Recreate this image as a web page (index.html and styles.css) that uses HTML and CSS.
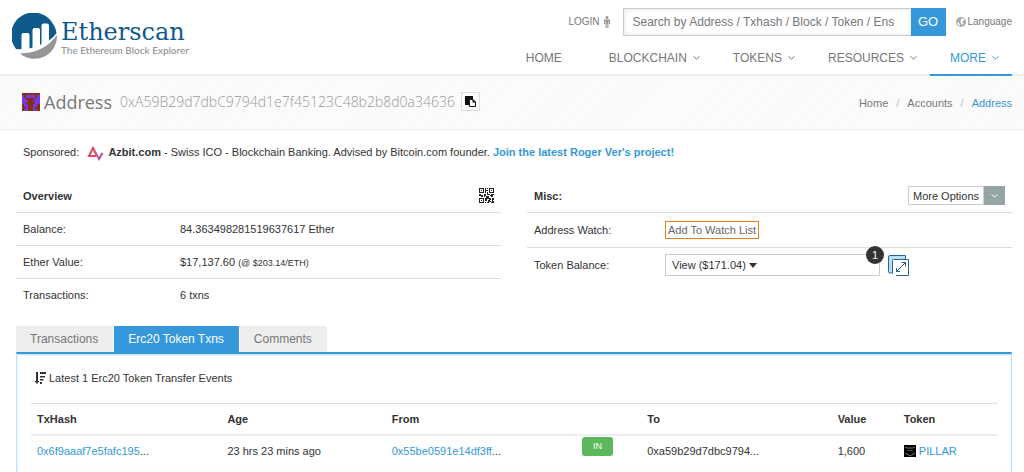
FILE: index.html
```html
<!DOCTYPE html>
<html lang="en">
<head>
  <meta charset="UTF-8" />
  <meta name="viewport" content="width=device-width, initial-scale=1.0"/>
  <title>Etherscan - Address</title>
  <link rel="stylesheet" href="styles.css">
</head>
<body>

<!-- Header -->
<header class="header">
  <a class="logo" href="#">
    <svg class="logo-mark" viewBox="0 0 46 48" aria-hidden="true">
      <path fill="#0e5a8a" d="M4 36A22.500 22.500 0 1 1 42 12.500Q44 16 44.500 20Q42 24 37 27.500V12.500Q37 10.500 35 10.500H31.500Q29.500 10.500 29.500 12.500V31L28 32V17Q28 15 26 15H22.500Q20.500 15 20.500 17V34.500L17.500 35.500V22Q17.500 20 15.500 20H11.500Q9.500 20 9.500 22V36Q7 36.500 4 36Z"/>
      <path fill="#959594" d="M8 40.500Q32 40 45 22A22.500 22.500 0 0 1 8 40.500Z"/>
    </svg>
    <span class="logo-text">
      <span class="logo-name">Etherscan</span>
      <span class="logo-tag">The Ethereum Block Explorer</span>
    </span>
  </a>

  <div class="header-right">
    <div class="topbar">
      <a class="login" href="#">LOGIN
        <svg class="icon-person" viewBox="0 0 8 12" aria-hidden="true"><circle cx="4" cy="1.500" r="1.500"/><path d="M1 3.500H7V8H6V5H5.500V12H4.300V8H3.700V12H2.500V5H2V8H1Z"/></svg>
      </a>
      <form class="search">
        <input type="text" aria-label="Search" placeholder="Search by Address / Txhash / Block / Token / Ens" />
        <button type="button">GO</button>
      </form>
      <a class="language" href="#">
        <svg class="icon-globe" viewBox="0 0 10 10" aria-hidden="true"><circle cx="5" cy="5" r="5" fill="#aaa"/><path fill="#fff" d="M6 1L8.500 2.500L7.500 4L6 4.500L7.500 6L6.500 8L5 6.500L4.500 4ZM1 5L3 6L4 8L3 9L1.500 7Z"/></svg>
        Language
      </a>
    </div>
    <nav class="nav">
      <a class="home" href="#">HOME</a>
      <a href="#">BLOCKCHAIN <svg class="caret" viewBox="0 0 7 4"><path d="M0.500 0.500L3.500 3L6.500 0.500"/></svg></a>
      <a href="#">TOKENS <svg class="caret" viewBox="0 0 7 4"><path d="M0.500 0.500L3.500 3L6.500 0.500"/></svg></a>
      <a href="#">RESOURCES <svg class="caret" viewBox="0 0 7 4"><path d="M0.500 0.500L3.500 3L6.500 0.500"/></svg></a>
      <a class="active" href="#">MORE <svg class="caret" viewBox="0 0 7 4"><path d="M0.500 0.500L3.500 3L6.500 0.500"/></svg></a>
    </nav>
  </div>
</header>

<!-- Address bar -->
<section class="breadcrumbs">
  <svg class="identicon" viewBox="0 0 8 8" shape-rendering="crispEdges" aria-hidden="true">
    <path fill="#7638ee" d="M0 0H8V8H0Z"/>
    <path fill="#84300f" d="M0 0H8V1H0ZM1 1H2V2H1ZM6 1H7V2H6ZM2 2H6V3H2ZM3 3H5V7H3ZM2 4H3V5H2ZM5 4H6V5H5ZM0 5H1V8H0ZM7 5H8V8H7ZM1 6H2V7H1ZM6 6H7V7H6ZM3 7H5V8H3Z"/>
  </svg>
  <h1>Address</h1>
  <span class="hash">0xA59B29d7dbC9794d1e7f45123C48b2b8d0a34636</span>
  <button class="copy" type="button" aria-label="Copy address">
    <svg viewBox="0 0 11 11"><path fill="#111" d="M0 0H8V3H4V9H0Z"/><path fill="#fff" stroke="#111" d="M4.500 3.500H8L10.500 6V10.500H4.500Z"/><path fill="#111" d="M7.500 3V6.500H11Z"/></svg>
  </button>
  <ol class="crumbs">
    <li><a href="#">Home</a></li>
    <li><a href="#">Accounts</a></li>
    <li><a class="current" href="#">Address</a></li>
  </ol>
</section>

<main class="container">
  <p class="sponsored">
    Sponsored:
    <svg class="azbit" viewBox="0 0 17 16" aria-hidden="true"><path fill="none" stroke="#dc4860" stroke-width="2" d="M9 11H2L6 3L9 9"/><path fill="none" stroke="#b0559b" stroke-width="2" d="M8 7L12 14L15.500 8"/></svg>
    <b>Azbit.com</b> - Swiss ICO - Blockchain Banking. Advised by Bitcoin.com founder.
    <a href="#"><b>Join the latest Roger Ver's project!</b></a>
  </p>

  <!-- Summary -->
  <div class="summary">
    <section>
      <div class="row head">
        <h2>Overview</h2>
        <svg class="qr" viewBox="0 0 15 15" shape-rendering="crispEdges" aria-hidden="true">
          <path fill="#222" fill-rule="evenodd" d="M0 0H5V5H0ZM1 1V4H4V1ZM10 0H15V5H10ZM11 1V4H14V1ZM0 10H5V15H0ZM1 11V14H4V11Z"/>
          <path fill="#222" d="M2 2H3V3H2ZM12 2H13V3H12ZM2 12H3V13H2ZM6 0H7V2H9V3H7V5H6ZM8 0H9V1H8ZM8 4H9V6H11V7H8ZM0 6H2V7H4V9H2V8H0ZM5 6H7V8H6V9H5ZM12 6H15V7H14V9H12V8H11V7H12ZM7 8H10V10H12V12H10V11H8V13H6V10H7ZM13 10H15V12H14V13H15V15H12V14H13ZM9 12H11V13H12V14H10V15H8V14H9ZM6 14H7V15H6Z"/>
        </svg>
      </div>
      <div class="row"><span class="label">Balance:</span><span>84.363498281519637617 Ether</span></div>
      <div class="row"><span class="label">Ether Value:</span><span>$17,137.60 <small>(@ $203.14/ETH)</small></span></div>
      <div class="row"><span class="label">Transactions:</span><span>6 txns</span></div>
    </section>

    <section class="misc">
      <div class="row head">
        <h2>Misc:</h2>
        <div class="options">
          <button type="button">More Options</button>
          <button class="toggle" type="button" aria-label="Show options"><svg class="caret" viewBox="0 0 7 4"><path d="M0.500 0.500L3.500 3L6.500 0.500"/></svg></button>
        </div>
      </div>
      <div class="row"><span class="label">Address Watch:</span><button class="watch" type="button">Add To Watch List</button></div>
      <div class="row">
        <span class="label">Token Balance:</span>
        <button class="balance" type="button">View ($171.04) <span class="triangle"></span><span class="badge">1</span></button>
        <a class="expand" href="#" aria-label="Expand token balance">
          <svg viewBox="0 0 21 21"><path fill="#b9def5" stroke="#28659b" d="M0.500 2Q0.500 0.500 2 0.500H17.500V4.500H5.500V18H2Q0.500 18 0.500 16.500Z"/><path fill="#fff" d="M5 4H21V21H5Z"/><path fill="none" stroke="#28659b" d="M4.500 18V5.500Q4.500 4.500 5.500 4.500H20.500V20.500H8"/><path fill="none" stroke="#1f5c96" d="M8.500 16.500L17 8M13.500 7.500H17.500V11.500M8.500 13V16.500H12"/></svg>
        </a>
      </div>
    </section>
  </div>

  <!-- Tabs -->
  <div class="tabs">
    <button type="button">Transactions</button>
    <button class="active" type="button">Erc20 Token Txns</button>
    <button type="button">Comments</button>
  </div>

  <section class="panel">
    <p class="latest">
      <svg class="icon-sort" viewBox="0 0 12 12" aria-hidden="true"><path fill="#333" d="M2 0H4V9H5.500L3 12L0.500 9H2ZM6 0H12V2H6ZM6 4H11V5.500H6ZM6 7H9.500V8.500H6ZM6 10H8V12H6Z"/></svg>
      Latest 1 Erc20 Token Transfer Events
    </p>
    <table>
      <colgroup>
        <col class="col-hash"><col class="col-age"><col class="col-hash"><col class="col-dir"><col class="col-hash"><col class="col-value"><col class="col-token">
      </colgroup>
      <thead>
        <tr><th>TxHash</th><th>Age</th><th>From</th><th></th><th>To</th><th>Value</th><th>Token</th></tr>
      </thead>
      <tbody>
        <tr>
          <td><a href="#">0x6f9aaaf7e5fafc195</a>...</td>
          <td>23 hrs 23 mins ago</td>
          <td><a href="#">0x55be0591e14df3ff</a>...</td>
          <td class="dir"><span class="in">IN</span></td>
          <td>0xa59b29d7dbc9794...</td>
          <td>1,600</td>
          <td class="token"><svg class="pillar" viewBox="0 0 12 12" aria-hidden="true"><path d="M0 0H12V12H0Z"/><path fill="none" stroke="#777" d="M1 2L3 3H9L11 2M1 8L6 11L11 8"/><path stroke="#444" d="M3 5.500H9"/></svg> <a href="#">PILLAR</a></td>
        </tr>
      </tbody>
    </table>
  </section>
</main>

</body>
</html>
```
FILE: styles.css
```css
* {
  box-sizing: border-box;
}

body {
  margin: 0;
  background: #fff;
  color: #333;
  font-family: "Liberation Sans", Arial, sans-serif;
  font-size: 11px;
  line-height: 16px;
}

a {
  color: #3498db;
  text-decoration: none;
}

button, input {
  font: inherit;
  color: inherit;
}

button {
  padding: 0;
  border: 0;
  background: none;
  cursor: pointer;
}

h1, h2, p, ol {
  margin: 0;
}

/* Header */
.header {
  display: flex;
  justify-content: space-between;
  padding: 0 12px;
  border-bottom: 2px solid #eee;
}

.logo {
  display: flex;
  align-items: center;
  gap: 3px;
}

.logo-mark {
  width: 46px;
  height: 48px;
}

.logo-text {
  display: flex;
  flex-direction: column;
}

.logo-name {
  color: #0e5a8a;
  font-family: "DejaVu Serif", serif;
  font-size: 24px;
  line-height: 26px;
}

.logo-tag {
  color: #888;
  font-family: Lato, sans-serif;
  font-size: 10px;
  line-height: 10px;
}

.header-right {
  display: flex;
  flex-direction: column;
  align-items: flex-end;
}

.topbar {
  display: flex;
  align-items: center;
  padding-top: 8px;
}

.login, .language {
  display: flex;
  align-items: center;
  color: #777;
  font-size: 10px;
}

.login {
  gap: 3px;
  margin-right: 12px;
}

.language {
  gap: 2px;
  margin-left: 10px;
}

.icon-person {
  width: 8px;
  height: 12px;
  fill: #999;
}

.icon-globe {
  width: 10px;
  height: 10px;
}

.search {
  display: flex;
}

.search input {
  width: 288px;
  height: 28px;
  padding: 0 9px;
  border: 1px solid #ccc;
  border-right: 0;
  border-radius: 0;
  box-shadow: inset 0 0 4px #ddd;
  font-size: 12px;
}

.search input::placeholder {
  color: #777;
}

.search button {
  width: 35px;
  height: 28px;
  background: #3498db;
  color: #fff;
  font-size: 13px;
}

.nav {
  display: flex;
  margin-bottom: -2px;
}

.nav a {
  display: flex;
  align-items: center;
  gap: 6px;
  height: 40px;
  padding: 5px 13px 0 20px;
  border-bottom: 2px solid transparent;
  color: #777;
  font-size: 12px;
}

.nav .home {
  padding-right: 27px;
}

.nav .active {
  border-color: #3498db;
  color: #3498db;
}

.caret {
  width: 7px;
  height: 4px;
  fill: none;
  stroke: currentColor;
}

/* Address bar */
.breadcrumbs {
  display: flex;
  align-items: center;
  height: 54px;
  padding: 0 12px 2px 21px;
  border-bottom: 1px solid #eee;
  background: repeating-linear-gradient(135deg, #fafafa 0 2px, #fcfcfc 2px 4px);
}

.identicon {
  width: 19px;
  height: 18px;
}

.breadcrumbs h1 {
  margin: 0 8px 0 4px;
  color: #777;
  font: 18px/24px "Open Sans", sans-serif;
}

.hash {
  color: #999;
  font: 300 14px/24px "Open Sans", sans-serif;
}

.copy {
  display: flex;
  align-items: center;
  justify-content: center;
  width: 19px;
  height: 19px;
  margin-left: 6px;
  border: 1px solid #ddd;
}

.copy svg {
  width: 11px;
  height: 11px;
}

.crumbs {
  display: flex;
  margin-left: auto;
  padding: 2px 0 0;
  list-style: none;
}

.crumbs li + li::before {
  content: "/";
  margin: 0 8px;
  color: #bbb;
}

.crumbs a {
  color: #777;
}

.crumbs .current {
  color: #3498db;
}

/* Content */
.container {
  padding: 0 12px 0 16px;
}

.sponsored {
  padding: 14px 7px 18px;
}

.azbit {
  width: 17px;
  height: 16px;
  margin: 0 1px 0 5px;
  vertical-align: middle;
}

.summary {
  display: grid;
  grid-template-columns: 1fr 1fr;
  gap: 26px;
}

.row {
  display: flex;
  align-items: center;
  height: 33px;
  padding: 0 7px;
}

.row + .row {
  border-top: 1px solid #ddd;
}

.misc .row + .row {
  height: 35px;
}

.head {
  justify-content: space-between;
}

.row h2 {
  font-size: 11px;
}

.row small {
  font-size: 9px;
}

.label {
  width: 157px;
}

.misc .label {
  width: 131px;
}

.qr {
  width: 15px;
  height: 15px;
}

.options {
  display: flex;
}

.options button {
  height: 19px;
  padding: 0 4px;
  border: 1px solid #ccc;
}

.options .toggle {
  display: flex;
  align-items: center;
  padding: 0 6px;
  border-color: #95a5a6;
  background: #95a5a6;
  color: #fff;
}

.watch {
  height: 18px;
  padding: 0 2px;
  border: 1px solid #e67e22;
  color: #666;
}

.balance {
  position: relative;
  width: 215px;
  height: 22px;
  padding: 0 6px;
  border: 1px solid #ccc;
  text-align: left;
}

.triangle {
  display: inline-block;
  border: 4px solid transparent;
  border-top: 5px solid #333;
  border-bottom: 0;
  vertical-align: 1px;
}

.badge {
  position: absolute;
  top: -9px;
  right: -5px;
  width: 18px;
  height: 18px;
  border-radius: 50%;
  background: #333;
  color: #fff;
  line-height: 18px;
  text-align: center;
}

.expand {
  display: flex;
  margin-left: 8px;
}

.expand svg {
  width: 21px;
  height: 21px;
}

/* Tabs */
.tabs {
  display: flex;
  gap: 1px;
  margin-top: 15px;
}

.tabs button {
  height: 26px;
  padding: 0 15px 0 14px;
  background: #eee;
  color: #777;
  font-size: 12px;
}

.tabs .active {
  background: #3498db;
  color: #fff;
}

.panel {
  min-height: 120px;
  padding: 16px 13px 0 14px;
  border: 1px solid #c5e3f5;
  border-top: 2px solid #3498db;
  border-bottom: 0;
  box-shadow: inset 0 1px 2px #b8def5;
}

.latest {
  display: flex;
  align-items: center;
  gap: 3px;
  padding-left: 3px;
}

.icon-sort {
  width: 12px;
  height: 12px;
}

table {
  width: 100%;
  margin-top: 17px;
  border-top: 1px solid #ddd;
  border-collapse: collapse;
  table-layout: fixed;
}

th, td {
  height: 31px;
  padding: 0 6px;
  text-align: left;
  white-space: nowrap;
}

th {
  border-bottom: 2px solid #eee;
}

.col-hash { width: 190px; }
.col-age { width: 164px; }
.col-dir { width: 65px; }
.col-value { width: 66px; }
.col-token { width: 100px; }

.dir {
  padding-bottom: 8px;
}

.in {
  display: block;
  width: 31px;
  height: 19px;
  border-radius: 3px;
  background: #5cb85c;
  color: #fff;
  font-size: 9px;
  line-height: 19px;
  text-align: center;
}

.pillar {
  width: 12px;
  height: 12px;
  vertical-align: text-bottom;
}
```
